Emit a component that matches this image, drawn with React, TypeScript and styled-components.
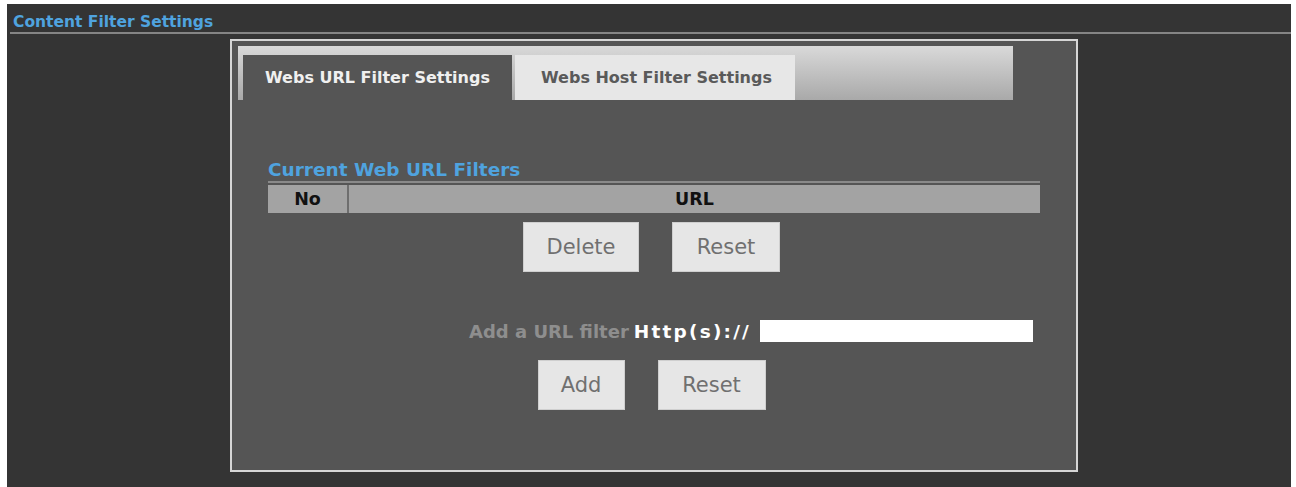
import React from "react";
import styled, { createGlobalStyle } from "styled-components";

const GlobalStyle = createGlobalStyle`
  html, body {
    margin: 0;
    padding: 0;
    background: #ffffff;
  }
  body {
    font-family: "DejaVu Sans", Verdana, sans-serif;
  }
`;

const Colors = {
  PAGE: "#343434",
  PANEL: "#555555",
  BLUE: "#4fa3df",
  FRAME: "#d6d6d6",
  RULE: "#858585",
  BUTTON: "#e6e6e6",
};

const App = () => {
  return (
    <>
      <GlobalStyle />
      <Page>
        <Header>Content Filter Settings</Header>
        <Panel>
          <TabBar>
            <Tab active>Webs URL Filter Settings</Tab>
            <Tab>Webs Host Filter Settings</Tab>
          </TabBar>
          <Content>
            <SectionTitle>Current Web URL Filters</SectionTitle>
            <FilterTable>
              <HeadCell width="79px">No</HeadCell>
              <HeadCell>URL</HeadCell>
            </FilterTable>
            <ButtonRow gap="33px">
              <Button width="116px">Delete</Button>
              <Button width="108px">Reset</Button>
            </ButtonRow>
            <AddRow>
              <AddLabel>Add a URL filter</AddLabel>
              <Prefix>Http(s)://</Prefix>
              <UrlInput type="text" />
            </AddRow>
            <ButtonRow gap="33px" top="18px">
              <Button width="87px">Add</Button>
              <Button width="108px">Reset</Button>
            </ButtonRow>
          </Content>
        </Panel>
      </Page>
    </>
  );
};

const Page = styled.div`
  margin: 4px 5px 0 7px;
  min-height: 483px;
  background: ${Colors.PAGE};
  padding-top: 9px;
  box-sizing: border-box;
`;

const Header = styled.h1`
  margin: 0 0 0 3px;
  padding: 0 0 1px 3px;
  border-bottom: 2px solid ${Colors.RULE};
  color: ${Colors.BLUE};
  font-size: 15.5px;
  font-weight: bold;
  line-height: 18px;
`;

const Panel = styled.div`
  margin: 5px 0 0 223px;
  width: 848px;
  height: 433px;
  box-sizing: border-box;
  border: 2px solid ${Colors.FRAME};
  background: ${Colors.PANEL};
  padding: 5px 0 0 6px;
`;

const TabBar = styled.div`
  display: flex;
  align-items: flex-end;
  gap: 3px;
  width: 775px;
  height: 54px;
  box-sizing: border-box;
  padding-left: 5px;
  background: linear-gradient(#d9d9d9, #a9a9a9);
`;

const Tab = styled.div<{ active?: boolean }>`
  display: flex;
  align-items: center;
  height: 45px;
  box-sizing: border-box;
  padding: 0 0 0 ${(p) => (p.active ? "22px" : "26px")};
  width: ${(p) => (p.active ? "269px" : "280px")};
  background: ${(p) => (p.active ? Colors.PANEL : "#e7e7e7")};
  color: ${(p) => (p.active ? "#f0f0f0" : "#5a5a5a")};
  font-size: 16px;
  font-weight: bold;
  white-space: nowrap;
`;

const Content = styled.div`
  padding: 59px 36px 0 30px;
`;

const SectionTitle = styled.h2`
  margin: 0;
  border-bottom: 2px solid #8a8a8a;
  color: ${Colors.BLUE};
  font-size: 18.5px;
  font-weight: bold;
  line-height: 22px;
`;

const FilterTable = styled.div`
  display: flex;
  gap: 2px;
  margin-top: 2px;
  height: 28px;
  background: #6e6e6e;
`;

const HeadCell = styled.div<{ width?: string }>`
  flex: ${(p) => (p.width ? `0 0 ${p.width}` : "1")};
  display: flex;
  align-items: center;
  justify-content: center;
  background: #a3a3a3;
  color: #111;
  font-size: 17.5px;
  font-weight: bold;
`;

const ButtonRow = styled.div<{ gap: string; top?: string }>`
  display: flex;
  justify-content: center;
  gap: ${(p) => p.gap};
  margin-top: ${(p) => p.top || "9px"};
  padding-right: 5px;
`;

const Button = styled.button<{ width: string }>`
  width: ${(p) => p.width};
  height: 50px;
  border: 1px solid #cfcfcf;
  background: ${Colors.BUTTON};
  color: #707070;
  font-family: "DejaVu Sans", Verdana, sans-serif;
  font-size: 21px;
  padding: 0;
`;

const AddRow = styled.div`
  display: flex;
  align-items: center;
  margin-top: 48px;
  padding-left: 201px;
  height: 22px;
`;

const AddLabel = styled.span`
  color: #8e8e8e;
  font-size: 18px;
  font-weight: bold;
  white-space: nowrap;
`;

const Prefix = styled.span`
  margin: 0 9px 0 5px;
  color: #ffffff;
  font-size: 18.5px;
  font-weight: bold;
  letter-spacing: 2.2px;
  white-space: nowrap;
`;

const UrlInput = styled.input`
  width: 273px;
  flex: none;
  height: 22px;
  box-sizing: border-box;
  border: none;
  background: #ffffff;
  padding: 0 4px;
`;

export default App;
